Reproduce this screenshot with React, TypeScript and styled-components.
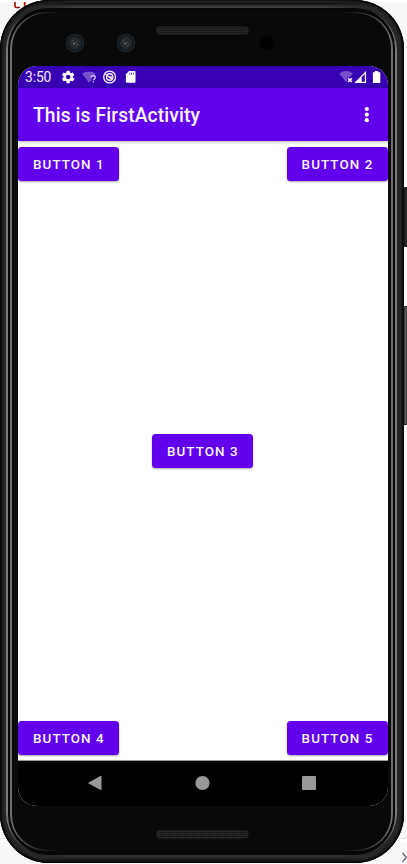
import React from "react";
import styled, { createGlobalStyle } from "styled-components";

const GlobalStyle = createGlobalStyle`
  html, body { margin: 0; padding: 0; }
  body { background: #f8f8f8; overflow: hidden; }
  * { box-sizing: border-box; }
`;

const Stage = styled.main`
  position: relative;
  width: 407px;
  height: 864px;
  overflow: hidden;
  background: linear-gradient(#fff 0 2px, #f8f8f8 2px 838px, #e4e4e4 838px 839px, #fff 839px 843px, #f8f8f8 843px);
  font-family: Roboto, sans-serif;
`;

const CodeScrap = styled.svg`
  position: absolute;
  left: 12px;
  top: 0;
`;

const CornerChevron = styled.svg`
  position: absolute;
  left: 401px;
  top: 851px;
`;

const SideKey = styled.div<{ $top: number; $height: number; $lit?: boolean }>`
  position: absolute;
  left: 402px;
  top: ${(p) => p.$top}px;
  width: 8px;
  height: ${(p) => p.$height}px;
  border-radius: 2px;
  background: ${(p) =>
    p.$lit
      ? "linear-gradient(90deg, #111 0 2px, #686868 3px, #555 4px, #2b2b2b 5px)"
      : "linear-gradient(90deg, #111 0 2px, #252525 3px, #333)"};
  border-top: 1px solid #333;
  border-bottom: 1px solid #222;
`;

const Chassis = styled.div`
  position: relative;
  width: 404px;
  height: 863px;
  padding: 8px 7px 8px 6px;
  border-radius: 49px;
  overflow: hidden;
  background: #262626;
  box-shadow: inset 0 0 0 1px #080808, inset 0 0 2px 2px #070707;

  /* light catching the top and bottom edges, fading into the corners */
  &::before {
    content: "";
    position: absolute;
    inset: 0;
    background:
      linear-gradient(#060606 0, #1d1d1d 1px, #2a2a2a 2px, #0e0e0e 3px, #202020 5px, #424242 7px, #3a3a3a 8px) 0 0 / 100% 8px no-repeat,
      linear-gradient(0deg, #050505 0, #101010 2px, #181818 4px, #2d2d2d 6px, #333 8px) 0 100% / 100% 8px no-repeat;
    mask-image: linear-gradient(90deg, transparent 34px, #000 74px calc(100% - 74px), transparent calc(100% - 34px));
  }
`;

const Rim = styled.div`
  position: relative;
  height: 100%;
  padding: 0 2px;
  border-radius: 42px;
  background: linear-gradient(#3b3b3b 0, #666 20px, #7c7c7c 50px, #7c7c7c 805px, #666 830px, #303030 100%);
`;

const Groove = styled.div`
  height: 100%;
  border-radius: 40px;
  padding: 4px 2px;
  background: #070707;
`;

const InnerRim = styled.div`
  height: 100%;
  padding: 1px 2px 1px 2px;
  border-radius: 37px;
  background: linear-gradient(90deg, #6e6e72 0 2px, #090909 50px calc(100% - 50px), #6e6e72 calc(100% - 2px));
`;

const Face = styled.div`
  position: relative;
  height: 100%;
  margin: 0;
  padding: 53px 5px 52px 6px;
  border-radius: 35px;
  background: #090909;
`;

const Grille = styled.div<{ $top: number }>`
  position: absolute;
  left: 144px;
  top: ${(p) => p.$top}px;
  width: 93px;
  height: 9px;
  border-radius: 5px;
  background:
    repeating-linear-gradient(90deg, #0c0c0c66 0 1px, transparent 1px 2px),
    repeating-linear-gradient(#1b1b1b 0 1px, #2c2c2c 1px 2px);
`;

const Camera = styled.svg<{ $left: number }>`
  position: absolute;
  left: ${(p) => p.$left}px;
  top: 20px;
`;

const Screen = styled.section`
  position: relative;
  width: 370px;
  height: 740px;
  border-radius: 19px;
  overflow: hidden;
  display: flex;
  flex-direction: column;
  background: #fff;
`;

const StatusBar = styled.header`
  height: 22px;
  flex: none;
  display: flex;
  align-items: center;
  background: #3700b3;
  color: #fff;
  padding-left: 7px;
`;

const Clock = styled.span`
  width: 36px;
  font-size: 13.8px;
  line-height: 22px;
  letter-spacing: -0.1px;
  color: #f3effc;
`;

const StatusIcons = styled.svg`
  display: block;
  flex: none;
`;

const SignalIcons = styled(StatusIcons)`
  margin-left: auto;
  margin-right: 5px;
`;

const AppBar = styled.div`
  height: 53px;
  flex: none;
  display: flex;
  align-items: center;
  justify-content: space-between;
  padding: 1px 18px 0 15px;
  background: #6200ee;
  box-shadow: 0 1px 3px rgba(0, 0, 0, 0.3);
  z-index: 1;
`;

const Title = styled.h1`
  margin: 0;
  padding-top: 1px;
  color: #f9f5ff;
  font-size: 19.3px;
  line-height: 24px;
  font-weight: 500;
  letter-spacing: 0.1px;
`;

const Content = styled.div`
  flex: 1;
  display: flex;
  flex-direction: column;
  justify-content: space-between;
  padding: 6px 0 5px;
`;

const ButtonRow = styled.div<{ $centered?: boolean }>`
  display: flex;
  justify-content: ${(p) => (p.$centered ? "center" : "space-between")};
`;

const MaterialButton = styled.button`
  width: 101.4px;
  height: 34px;
  padding: 1px 0 0 15px;
  border: 0;
  border-radius: 3.5px;
  background: #6200ee;
  box-shadow: 0 1px 2px rgba(0, 0, 0, 0.34);
  color: #faf6ff;
  font: 500 13.4px/33px Roboto, sans-serif;
  letter-spacing: 1.08px;
  text-align: left;
  white-space: nowrap;

  ${ButtonRow} > &:only-child {
    margin-right: 0.8px;
  }
`;

const NavBar = styled.nav`
  height: 46px;
  flex: none;
  display: flex;
  justify-content: space-between;
  padding: 14px 71px 0 69px;
  border-top: 1px solid #999;
  background: #000;
`;

const Lens = ({ left }: { left: number }) => (
  <Camera $left={left} width="20" height="20" viewBox="0 0 20 20">
    <circle cx="10" cy="10" r="9.5" fill="#182025" />
    <circle cx="10" cy="10" r="7.3" fill="#11171b" />
    <circle cx="10" cy="10" r="5.5" fill="#252729" stroke="#303336" strokeWidth="0.8" />
    <path d="M7 8.5 9 6.5M9 11.5l3-3M11 13l2-2" stroke="#62656a" strokeWidth="0.9" />
    <circle cx="9" cy="10.5" r="1" fill="#6a6870" />
  </Camera>
);

export default function App() {
  return (
    <>
      <GlobalStyle />
      <Stage>
        <CodeScrap width="18" height="10" viewBox="0 0 18 10" fill="none">
          <path d="M3 2v4.2q0 1.3 1.5 1.3H8" stroke="#991510" strokeWidth="1.7" />
          <path d="M12.8 2v6" stroke="#b52020" strokeWidth="1.7" />
          <path d="M11.3 2v5" stroke="#f4bd76" strokeWidth="0.8" />
        </CodeScrap>
        <CornerChevron width="6" height="12" viewBox="0 0 6 12" fill="none">
          <path d="m1.5 2 4 4.5-4 4.5" stroke="#555b70" strokeWidth="1.2" />
        </CornerChevron>
        <SideKey $top={187} $height={60} />
        <SideKey $top={306} $height={119} $lit />
        <Chassis>
          <Rim>
            <Groove>
              <InnerRim>
                <Face>
                  <Grille $top={13} />
                  <Grille $top={817} />
                  <Lens left={53} />
                  <Lens left={104} />
                  <Camera $left={247} width="16" height="20" viewBox="0 0 16 20">
                    <circle cx="8" cy="10" r="7" fill="#010101" />
                  </Camera>
                  <Screen>
                    <StatusBar>
                      <Clock>3:50</Clock>
                      <StatusIcons width="76" height="22" viewBox="0 0 76 22">
                        <g transform="translate(-.4 3.4) scale(.63)">
                          <path
                            fill="#fff"
                            fillRule="evenodd"
                            d="M19.4 13a8 8 0 0 0 0-2l2.1-1.6a.5.5 0 0 0 .1-.7l-2-3.4a.5.5 0 0 0-.6-.2l-2.5 1a8 8 0 0 0-1.7-1L14.4 2.4A.5.5 0 0 0 14 2h-4a.5.5 0 0 0-.5.4l-.3 2.7a8 8 0 0 0-1.7 1l-2.5-1a.5.5 0 0 0-.6.2l-2 3.4a.5.5 0 0 0 .1.7L4.6 11a8 8 0 0 0 0 2l-2.1 1.6a.5.5 0 0 0-.1.7l2 3.4c.1.2.4.3.6.2l2.5-1a8 8 0 0 0 1.7 1l.4 2.7c0 .2.2.4.4.4h4c.2 0 .5-.2.5-.4l.4-2.7a8 8 0 0 0 1.7-1l2.5 1c.2.1.5 0 .6-.2l2-3.4a.5.5 0 0 0-.1-.7ZM12 15.5a3.5 3.5 0 1 1 0-7 3.5 3.5 0 0 1 0 7Z"
                          />
                        </g>
                        <path d="M21 7.4Q27.8 3.4 34.5 7.4L32.8 9.6H30.5V14.5L27.8 16.4Z" fill="#7a50ce" />
                        <path d="M30.3 11.6c0-2.5 3.9-2.4 3.9-.1 0 1.5-1.8 1.4-1.8 2.8M32.4 15.2v1.3" fill="none" stroke="#e1d8f5" strokeWidth="1.3" />
                        <g fill="none" stroke="#f3effc">
                          <circle cx="48.6" cy="11" r="5.9" strokeWidth="1.3" />
                          <circle cx="48.7" cy="11" r="3.2" strokeWidth="1.4" />
                          <path d="m44.4 8.2 6.6 5M47.6 10.6l3.6.4" strokeWidth="1.3" />
                        </g>
                        <path d="M68 5.1h5.5q1 0 1 1v9.7q0 1-1 1h-7.6q-1 0-1-1V8.2Z" fill="#fff" />
                        <path d="M68.6 6.6v2M70.5 6.6v2M72.4 6.6v2" stroke="#3700b3" strokeWidth=".8" />
                      </StatusIcons>
                      <SignalIcons width="44" height="22" viewBox="0 0 44 22">
                        <path d="M.2 7.4Q7 2.6 13.9 7.4L10.5 11.5H8.2V15.5L6.9 16Z" fill="#7a50ce" />
                        <path d="m9.1 12.2 3.8 3.8m0-3.8L9.1 16" stroke="#fff" strokeWidth="1.5" />
                        <path d="M15.3 16.9 27 5v11.9Z" fill="#fff" />
                        <path d="M22.7 11.2 25.8 8v7.8h-3.1Z" fill="#3700b3" />
                        <path d="M35.9 5h3.4v1.2h2V17h-7.4V6.2h2Z" fill="#fff" />
                      </SignalIcons>
                    </StatusBar>
                    <AppBar>
                      <Title>This is FirstActivity</Title>
                      <StatusIcons width="6" height="18" viewBox="0 0 6 18" fill="#fff">
                        <circle cx="2.8" cy="3" r="2.1" />
                        <circle cx="2.8" cy="8.6" r="2.1" />
                        <circle cx="2.8" cy="14.2" r="2.1" />
                      </StatusIcons>
                    </AppBar>
                    <Content>
                      <ButtonRow>
                        <MaterialButton>BUTTON 1</MaterialButton>
                        <MaterialButton>BUTTON 2</MaterialButton>
                      </ButtonRow>
                      <ButtonRow $centered>
                        <MaterialButton>BUTTON 3</MaterialButton>
                      </ButtonRow>
                      <ButtonRow>
                        <MaterialButton>BUTTON 4</MaterialButton>
                        <MaterialButton>BUTTON 5</MaterialButton>
                      </ButtonRow>
                    </Content>
                    <NavBar>
                      <StatusIcons width="16" height="16" viewBox="0 0 16 16">
                        <path d="M1.7 8 14 1.1v13.6Z" fill="#999" stroke="#999" strokeLinejoin="round" />
                      </StatusIcons>
                      <StatusIcons width="16" height="16" viewBox="0 0 16 16">
                        <circle cx="8.5" cy="8" r="7.1" fill="#999" />
                      </StatusIcons>
                      <StatusIcons width="16" height="16" viewBox="0 0 16 16">
                        <rect x="1" y="1" width="14" height="14" rx="1" fill="#999" />
                      </StatusIcons>
                    </NavBar>
                  </Screen>
                </Face>
              </InnerRim>
            </Groove>
          </Rim>
        </Chassis>
      </Stage>
    </>
  );
}
